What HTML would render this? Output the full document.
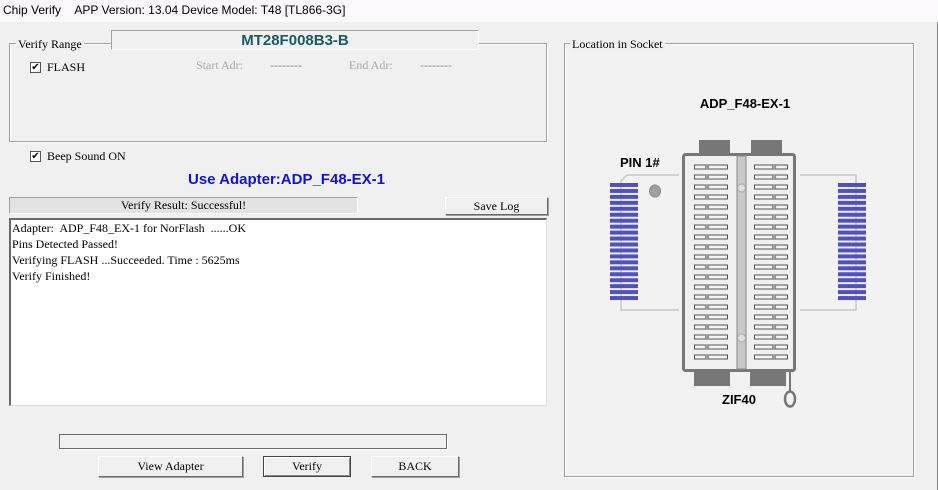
<!DOCTYPE html>
<html><head><meta charset="utf-8"><style>
*{margin:0;padding:0;box-sizing:border-box}
body{width:938px;height:490px;background:#f0f0f0;position:relative;overflow:hidden;font-family:"Liberation Serif",serif;font-size:12px;color:#000}
.a{position:absolute;white-space:nowrap}
.title{left:0;top:0;width:938px;height:22px;background:#fbf8fb;font-family:"Liberation Sans",sans-serif;font-size:12px;line-height:20px;padding-left:3px}
.grp{position:absolute;border:1px solid #a0a0a0;box-shadow:1px 1px 0 #fff inset,1px 1px 0 #fff}
.lbl{background:#f0f0f0;padding:0 2px}
.cb{position:absolute;width:11px;height:11px;border:1px solid #555;background:#fff;font-size:10px;line-height:9px;text-align:center;font-family:"DejaVu Sans",sans-serif;font-weight:bold}
.btn{position:absolute;background:#f0f0f0;border:1px solid;border-color:#fff #6a6a6a #6a6a6a #fff;box-shadow:1px 1px 0 #a0a0a0;text-align:center;font-size:12px;line-height:19px}
</style></head><body>
<div class="a title">Chip Verify&nbsp;&nbsp;&nbsp;&nbsp;APP Version: 13.04 Device Model: T48 [TL866-3G]</div>
<div class="grp" style="left:9px;top:43px;width:538px;height:99px"></div>
<div class="a lbl" style="left:16px;top:36px;line-height:16px">Verify Range</div>
<div class="a" style="left:111px;top:30px;width:368px;height:20px;background:#f0f0f0;border:1px solid #a0a0a0;border-bottom-color:#fff;border-right-color:#fff;text-align:center;font:bold 15px/19px 'Liberation Sans',sans-serif;color:#1b5a5e">MT28F008B3-B</div>
<div class="cb" style="left:30px;top:62px">✔</div>
<div class="a" style="left:47px;top:60px;line-height:15px">FLASH</div>
<div class="a" style="left:196px;top:58px;color:#a8a8a8;line-height:15px">Start Adr:</div>
<div class="a" style="left:270px;top:58px;color:#888;line-height:15px">--------</div>
<div class="a" style="left:349px;top:58px;color:#a8a8a8;line-height:15px">End Adr:</div>
<div class="a" style="left:420px;top:58px;color:#888;line-height:15px">--------</div>
<div class="cb" style="left:30px;top:151px">✔</div>
<div class="a" style="left:47px;top:149px;line-height:15px">Beep Sound ON</div>
<div class="a" style="left:188px;top:171px;font:bold 15px/18px 'Liberation Sans',sans-serif;color:#1010e0">Use Adapter:ADP_F48-EX-1</div>
<div class="a" style="left:9px;top:197px;width:349px;height:17px;background:#e3e3e3;border:1px solid #a0a0a0;border-right-color:#fff;border-bottom-color:#fff;text-align:center;line-height:15px">Verify Result: Successful!</div>
<div class="btn" style="left:445px;top:197px;width:103px;height:18px;line-height:16px">Save Log</div>
<div class="a" style="left:9px;top:218px;width:538px;height:188px;background:#fff;border:2px solid #6a6a6a;border-right:1px solid #e0e0e0;border-bottom:1px solid #e0e0e0;padding-left:1px;line-height:16px;font-size:12px">Adapter:&nbsp; ADP_F48_EX-1 for NorFlash&nbsp; ......OK<br>Pins Detected Passed!<br>Verifying FLASH ...Succeeded. Time : 5625ms<br>Verify Finished!</div>
<div class="a" style="left:59px;top:434px;width:388px;height:15px;border:1px solid #6a6a6a;background:#f0f0f0;box-shadow:1px 1px 0 #fff"></div>
<div class="btn" style="left:98px;top:456px;width:145px;height:21px">View Adapter</div>
<div class="btn" style="left:263px;top:456px;width:88px;height:21px;border:1px solid #444;box-shadow:inset 1px 1px 0 #fff,inset -1px -1px 0 #888">Verify</div>
<div class="btn" style="left:371px;top:456px;width:88px;height:21px">BACK</div>
<div class="grp" style="left:564px;top:43px;width:350px;height:434px;background:#f2f2f2"></div>
<div class="a lbl" style="left:570px;top:36px;line-height:16px">Location in Socket</div>
<div style="position:absolute;right:0;top:22px;width:1px;height:468px;background:#888"></div>
<svg class="a" style="left:0;top:0" width="938" height="490" viewBox="0 0 938 490">
<defs>
<pattern id="sl" patternUnits="userSpaceOnUse" x="694" y="164.5" width="94" height="10">
<rect x="0.5" y="0.5" width="33" height="4" fill="#f4f4f4" stroke="#555" stroke-width="1"/>
<circle cx="13" cy="2.5" r="2.2" fill="#999"/>
<rect x="60.5" y="0.5" width="33" height="4" fill="#f4f4f4" stroke="#555" stroke-width="1"/>
<circle cx="80" cy="2.5" r="2.2" fill="#999"/>
</pattern>
<pattern id="bp" patternUnits="userSpaceOnUse" x="0" y="183" width="20" height="5.95">
<rect x="0" y="0" width="20" height="4" fill="#5050c0"/>
</pattern>
</defs>
<text x="745" y="108" text-anchor="middle" font-family="Liberation Sans,sans-serif" font-weight="bold" font-size="13">ADP_F48-EX-1</text>
<text x="620" y="167" font-family="Liberation Sans,sans-serif" font-weight="bold" font-size="13">PIN 1#</text>
<text x="722" y="404" font-family="Liberation Sans,sans-serif" font-weight="bold" font-size="13">ZIF40</text>
<polyline points="679,175 627,175 621,181 621,310 679,310" fill="none" stroke="#c8c8c8" stroke-width="1.5"/>
<polyline points="800,175 856,175 856,310 800,310" fill="none" stroke="#c8c8c8" stroke-width="1.5"/>
<rect x="610" y="183" width="28" height="119" fill="url(#bp)"/>
<rect x="838" y="183" width="28" height="119" fill="url(#bp)"/>
<ellipse cx="655" cy="191" rx="5.5" ry="6" fill="#a0a0a0" stroke="#888"/>
<rect x="699" y="140" width="31" height="14" fill="#777"/>
<rect x="751" y="140" width="31" height="14" fill="#777"/>
<rect x="694" y="370" width="36" height="16" fill="#777"/>
<rect x="750" y="370" width="36" height="16" fill="#777"/>
<rect x="683.5" y="154.5" width="111" height="216" rx="2" fill="#f0f0f0" stroke="#777" stroke-width="3"/>
<rect x="737" y="156" width="9" height="213" fill="#c8c8c8" stroke="#888" stroke-width="1"/>
<circle cx="741.5" cy="188" r="4" fill="#ddd" stroke="#aaa"/>
<circle cx="741.5" cy="338" r="4" fill="#ddd" stroke="#aaa"/>
<rect x="694" y="164" width="94" height="200" fill="url(#sl)"/>
<line x1="790" y1="370" x2="790" y2="392" stroke="#777" stroke-width="2"/>
<ellipse cx="790" cy="399" rx="5" ry="7.5" fill="none" stroke="#777" stroke-width="2.5"/>
</svg>
</body></html>
